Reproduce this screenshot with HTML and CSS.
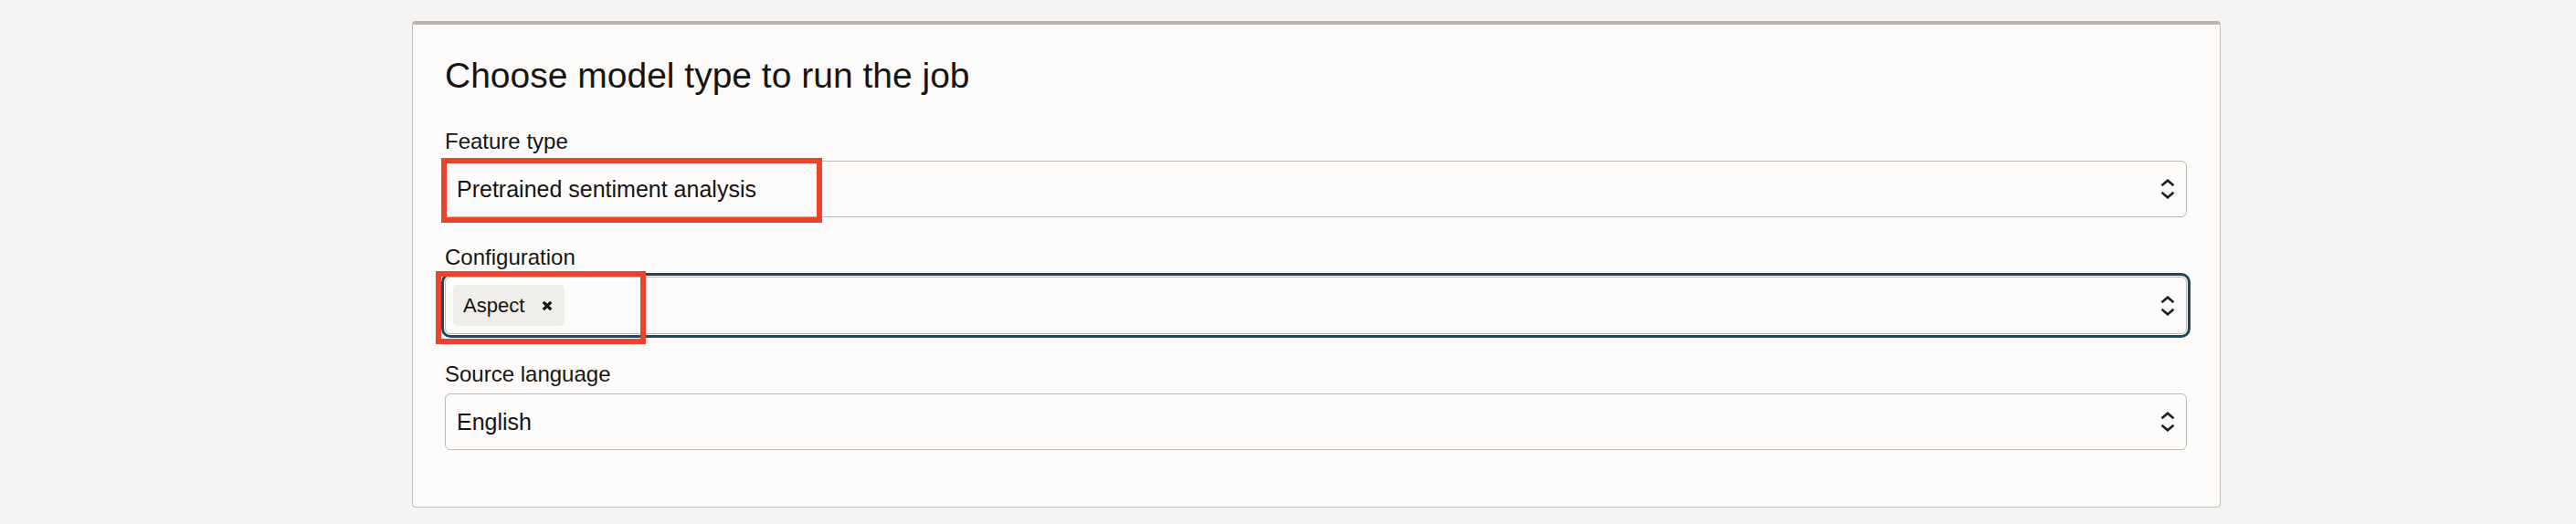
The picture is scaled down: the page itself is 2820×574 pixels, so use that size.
FILE: index.html
```html
<!DOCTYPE html>
<html lang="en">
<head>
    <meta charset="UTF-8">
    <meta name="viewport" content="width=device-width, initial-scale=1.0">
    <title>Choose model type</title>
    <link rel="stylesheet" href="styles.css">
</head>
<body>
    <div class="page">
        <section class="card">
            <h2 class="card-title">Choose model type to run the job</h2>

            <div class="field">
                <div class="field-label">Feature type</div>
                <div class="select">
                    <span class="select-value">Pretrained sentiment analysis</span>
                    <svg class="select-arrows" viewBox="0 0 16 22" width="16" height="22">
                        <path d="M1.5 7.2 L8 1.8 L14.5 7.2 M1.5 14.8 L8 20.2 L14.5 14.8" />
                    </svg>
                    <span class="callout callout-feature"></span>
                </div>
            </div>

            <div class="field">
                <div class="field-label">Configuration</div>
                <div class="select select-multi is-focused">
                    <span class="chip">
                        Aspect
                        <svg class="chip-remove" viewBox="0 0 12 12" width="12" height="12">
                            <path d="M1.8 1.8 L10.2 10.2 M10.2 1.8 L1.8 10.2" />
                        </svg>
                    </span>
                    <span class="select-value"></span>
                    <svg class="select-arrows" viewBox="0 0 16 22" width="16" height="22">
                        <path d="M1.5 7.2 L8 1.8 L14.5 7.2 M1.5 14.8 L8 20.2 L14.5 14.8" />
                    </svg>
                    <span class="callout callout-config"></span>
                </div>
            </div>

            <div class="field">
                <div class="field-label">Source language</div>
                <div class="select">
                    <span class="select-value">English</span>
                    <svg class="select-arrows" viewBox="0 0 16 22" width="16" height="22">
                        <path d="M1.5 7.2 L8 1.8 L14.5 7.2 M1.5 14.8 L8 20.2 L14.5 14.8" />
                    </svg>
                </div>
            </div>
        </section>
    </div>
</body>
</html>
```

FILE: styles.css
```css
body {
    margin: 0;
    background: #f5f4f2;
    font-family: "Liberation Sans", Arial, sans-serif;
    color: #161513;
}

.page {
    padding: 23px 0 17px 451px;
}

.card {
    box-sizing: border-box;
    width: 1980px;
    padding: 32px 36px 62px 35px;
    background: #fcfbfa;
    border: 1px solid #c3beb9;
    border-top: 4px solid #b9b4ae;
    border-radius: 4px;
}

.card-title {
    margin: 0 0 33px;
    font-size: 39px;
    font-weight: normal;
    line-height: 48px;
}

.field + .field {
    margin-top: 29px;
}

.field-label {
    margin-bottom: 6px;
    font-size: 24px;
    line-height: 30px;
}

/* select box */
.select {
    position: relative;
    box-sizing: border-box;
    display: flex;
    align-items: center;
    height: 62px;
    padding: 0 12px;
    background: #fcfbfa;
    border: 1px solid #bdb7b1;
    border-radius: 6px;
}

.select-value {
    flex: 1;
    font-size: 25px;
}

.select-arrows {
    flex: none;
    fill: none;
    stroke: #1f1e1c;
    stroke-width: 2.6;
}

.select-multi {
    height: 63px;
    padding-left: 8px;
}

.is-focused {
    outline: 3px solid #1d4761;
    outline-offset: 1px;
}

.chip {
    display: inline-flex;
    align-items: center;
    gap: 19px;
    height: 45px;
    padding: 0 13px 0 11px;
    box-sizing: border-box;
    background: #f0eeeb;
    border-radius: 5px;
    font-size: 22px;
}

.chip-remove {
    fill: none;
    stroke: #161513;
    stroke-width: 3.2;
}

/* red annotation boxes */
.callout {
    position: absolute;
    box-sizing: border-box;
    border: 6px solid #e8442e;
    pointer-events: none;
}

.callout-feature {
    left: -5px;
    top: -4px;
    width: 417px;
    height: 71px;
}

.callout-config {
    left: -11px;
    top: -7px;
    width: 230px;
    height: 80px;
}
```
